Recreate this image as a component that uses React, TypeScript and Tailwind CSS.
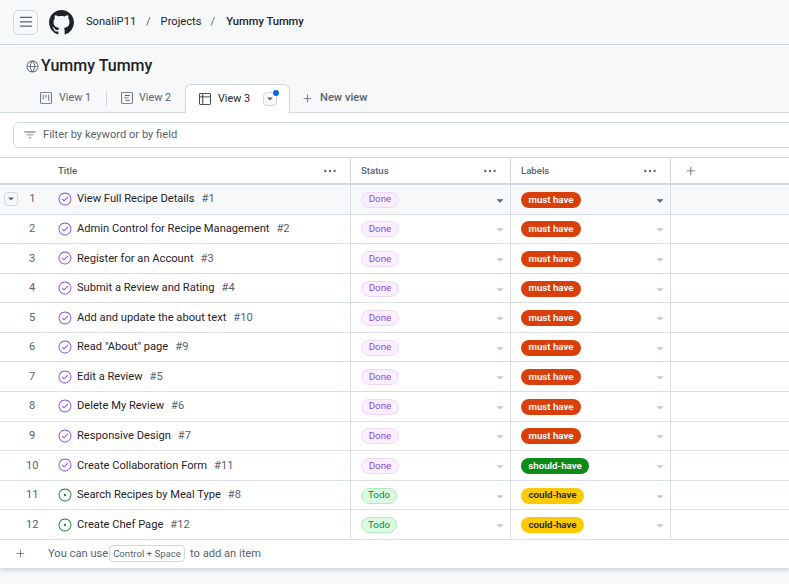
import React from 'react';
import {
  GoGlobe,
  GoProject,
  GoProjectRoadmap,
  GoTable,
  GoPlus,
  GoFilter,
  GoKebabHorizontal,
  GoTriangleDown,
  GoIssueClosed,
  GoIssueOpened,
} from 'react-icons/go';

type Item = { title: string; num: number; status: 'Done' | 'Todo'; label: 'must have' | 'should-have' | 'could-have' };

const items: Item[] = [
  { title: 'View Full Recipe Details', num: 1, status: 'Done', label: 'must have' },
  { title: 'Admin Control for Recipe Management', num: 2, status: 'Done', label: 'must have' },
  { title: 'Register for an Account', num: 3, status: 'Done', label: 'must have' },
  { title: 'Submit a Review and Rating', num: 4, status: 'Done', label: 'must have' },
  { title: 'Add and update the about text', num: 10, status: 'Done', label: 'must have' },
  { title: 'Read "About" page', num: 9, status: 'Done', label: 'must have' },
  { title: 'Edit a Review', num: 5, status: 'Done', label: 'must have' },
  { title: 'Delete My Review', num: 6, status: 'Done', label: 'must have' },
  { title: 'Responsive Design', num: 7, status: 'Done', label: 'must have' },
  { title: 'Create Collaboration Form', num: 11, status: 'Done', label: 'should-have' },
  { title: 'Search Recipes by Meal Type', num: 8, status: 'Todo', label: 'could-have' },
  { title: 'Create Chef Page', num: 12, status: 'Todo', label: 'could-have' },
];

const labelClass = {
  'must have': 'bg-[#d93f0b] text-white w-[60px]',
  'should-have': 'bg-[#0e8a16] text-white w-[68px]',
  'could-have': 'bg-[#fbca04] text-[#1f2328] w-[63px]',
};

const ThreeBars = () => (
  <svg width="14" height="14" viewBox="0 0 16 16" fill="currentColor">
    <path d="M1 2.75A.75.75 0 0 1 1.75 2h12.5a.75.75 0 0 1 0 1.5H1.75A.75.75 0 0 1 1 2.75Zm0 5A.75.75 0 0 1 1.75 7h12.5a.75.75 0 0 1 0 1.5H1.75A.75.75 0 0 1 1 7.75ZM1.75 12h12.5a.75.75 0 0 1 0 1.5H1.75a.75.75 0 0 1 0-1.5Z" />
  </svg>
);

const GithubMark = () => (
  <svg width="25" height="25" viewBox="0 0 16 16" fill="currentColor" className="ml-[11px] text-[#1f2328]">
    <path d="M8 0c4.42 0 8 3.58 8 8a8.013 8.013 0 0 1-5.45 7.59c-.4.08-.55-.17-.55-.38 0-.27.01-1.13.01-2.2 0-.75-.25-1.23-.54-1.48 1.78-.2 3.65-.88 3.65-3.95 0-.88-.31-1.59-.82-2.15.08-.2.36-1.02-.08-2.12 0 0-.67-.22-2.2.82-.64-.18-1.32-.27-2-.27-.68 0-1.36.09-2 .27-1.53-1.03-2.2-.82-2.2-.82-.44 1.1-.16 1.92-.08 2.12-.51.56-.82 1.28-.82 2.15 0 3.06 1.86 3.75 3.64 3.95-.23.2-.44.55-.51 1.07-.46.21-1.61.55-2.33-.66-.15-.24-.6-.83-1.23-.82-.67.01-.27.38.01.53.34.19.73.9.82 1.13.16.45.68 1.31 2.69.94 0 .67.01 1.3.01 1.49 0 .21-.15.45-.55.38A7.995 7.995 0 0 1 0 8c0-4.42 3.58-8 8-8Z" />
  </svg>
);

const Row = ({ item, index }: { item: Item; index: number }) => {
  const active = index === 0;
  const caret = active ? 'text-[#59636e]' : 'text-[#c4c9cf]';
  return (
    <div className={`flex h-[29.58px] border-b border-[#d8dee4] ${active ? 'bg-[#f6f8fa]' : 'bg-white'}`}>
      <div className="w-[47px] shrink-0 flex items-center">
        <div className="w-[18px] pl-1">
          {active && (
            <div className="w-[14px] h-[14px] rounded-[4px] border border-[#d0d7de] bg-[#f6f8fa] flex items-center justify-center text-[#59636e]">
              <GoTriangleDown size={10} />
            </div>
          )}
        </div>
        <span className="w-[31px] mt-px text-center text-[11.15px] text-[#59636e]">{index + 1}</span>
      </div>
      <div className="w-[304px] shrink-0 flex items-center pl-[11px] border-r border-[#d8dee4] text-[11.15px]">
        {item.status === 'Done' ? (
          <GoIssueClosed size={14} className="text-[#8250df] shrink-0" />
        ) : (
          <GoIssueOpened size={14} className="text-[#1a7f37] shrink-0" />
        )}
        <span className="ml-[5px] mt-px text-[#1f2328] whitespace-nowrap">{item.title}</span>
        <span className="ml-[7px] mt-px text-[#59636e] whitespace-nowrap">#{item.num}</span>
      </div>
      <div className="w-[160px] shrink-0 flex items-center justify-between pl-[10px] pr-[4px] border-r border-[#d8dee4]">
        {item.status === 'Done' ? (
          <span className="mt-px h-4 w-[38px] rounded-full border border-[#ecd8ff] bg-[#fbefff] text-[#8250df] text-[9.8px] flex items-center justify-center">
            Done
          </span>
        ) : (
          <span className="mt-px h-4 w-[36px] rounded-full border border-[#aceebb] bg-[#dafbe1] text-[#1a7f37] text-[9.8px] flex items-center justify-center">
            Todo
          </span>
        )}
        <GoTriangleDown size={12} className={`mt-[3px] ${caret}`} />
      </div>
      <div className="w-[160px] shrink-0 flex items-center justify-between pl-[10px] pr-[4px] border-r border-[#d8dee4]">
        <span className={`mt-px h-4 rounded-full text-[9.7px] font-semibold flex items-center justify-center whitespace-nowrap ${labelClass[item.label]}`}>
          {item.label}
        </span>
        <GoTriangleDown size={12} className={`mt-[3px] ${caret}`} />
      </div>
      <div className="flex-1" />
    </div>
  );
};

export default function App() {
  return (
    <div className="w-[789px] h-[584px] overflow-hidden bg-[#f6f8fa] text-[#1f2328] font-['Roboto','Open_Sans',sans-serif] text-[11.15px]">
      {/* Top bar */}
      <header className="h-[45px] border-b border-[#d0d7de] flex items-center pl-[13px]">
        <div className="w-[25px] h-[25px] rounded-[6px] border border-[#d0d7de] flex items-center justify-center text-[#59636e]">
          <ThreeBars />
        </div>
        <GithubMark />
        <span className="ml-[12px] w-[49px] text-[#1f2328]">SonaliP11</span>
        <span className="ml-[11px] text-[#59636e]">/</span>
        <span className="ml-[10px] w-[40px] text-[#1f2328]">Projects</span>
        <span className="ml-[10px] text-[#59636e]">/</span>
        <span className="ml-[11px] font-medium text-[#1f2328]">Yummy Tummy</span>
      </header>

      {/* Project title and tabs */}
      <div className="h-[68px] border-b border-[#d0d7de] relative">
        <div className="flex items-center pl-[26px] pt-[3px] h-[39px]">
          <GoGlobe size={13} className="text-[#59636e]" />
          <h1 className="ml-[2px] text-[16px] font-medium leading-none">Yummy Tummy</h1>
        </div>
        <div className="flex items-end h-[28px] pl-[39px]">
          <div className="flex items-center h-[28px] text-[#59636e]">
            <GoProject size={14} />
            <span className="ml-[6px] mt-px w-[32px] text-[10.8px] whitespace-nowrap">View 1</span>
          </div>
          <div className="ml-[15px] w-px h-[15px] mb-[6px] bg-[#d0d7de]" />
          <div className="ml-[13px] flex items-center h-[28px] text-[#59636e]">
            <GoProjectRoadmap size={14} />
            <span className="ml-[5px] mt-px w-[32px] text-[10.8px] whitespace-nowrap">View 2</span>
          </div>
          <div className="ml-[14px] w-[105px] h-[29px] -mb-px shrink-0 flex items-center pl-[12px] bg-white border border-b-0 border-[#d0d7de] rounded-t-[6px]">
            <GoTable size={14} />
            <span className="ml-[6px] mt-px w-[32px] text-[10.8px] whitespace-nowrap">View 3</span>
            <div className="relative ml-[13px] w-[14px] h-[14px] rounded-[4px] border border-[#d0d7de] bg-[#f6f8fa] flex items-center justify-center text-[#59636e]">
              <GoTriangleDown size={10} />
              <span className="absolute -top-[3px] -right-[3px] w-[6px] h-[6px] rounded-full bg-[#0969da]" />
            </div>
          </div>
          <div className="ml-[11px] flex items-center h-[28px] text-[#59636e]">
            <GoPlus size={13} />
            <span className="ml-[6px] font-medium whitespace-nowrap">New view</span>
          </div>
        </div>
      </div>

      {/* Table panel */}
      <div className="bg-white h-[455px] shadow-[0_2px_4px_rgba(140,149,159,0.4)]">
        <div className="h-[44px] flex items-center pl-[13px]">
          <div className="w-[800px] shrink-0 h-[26px] rounded-[6px] border border-[#d0d7de] flex items-center pl-[9px] text-[#59636e]">
            <GoFilter size={14} />
            <span className="ml-[6px] mt-px">Filter by keyword or by field</span>
          </div>
        </div>
        <div className="flex h-[28px] border-t border-b-2 border-[#d0d7de] text-[9.6px] font-medium text-[#59636e]">
          <div className="w-[351px] shrink-0 flex items-center justify-between pl-[58px] pr-[13px] border-r border-[#d0d7de]">
            <span className="mt-[2px]">Title</span>
            <GoKebabHorizontal size={14} />
          </div>
          <div className="w-[160px] shrink-0 flex items-center justify-between pl-[10px] pr-[13px] border-r border-[#d0d7de]">
            <span className="mt-[2px]">Status</span>
            <GoKebabHorizontal size={14} />
          </div>
          <div className="w-[160px] shrink-0 flex items-center justify-between pl-[10px] pr-[13px] border-r border-[#d0d7de]">
            <span className="mt-[2px]">Labels</span>
            <GoKebabHorizontal size={14} />
          </div>
          <div className="flex-1 flex items-center pl-[13px]">
            <GoPlus size={14} />
          </div>
        </div>
        {items.map((item, i) => (
          <Row key={item.num} item={item} index={i} />
        ))}
        <div className="h-[28px] flex items-center pl-[14px] text-[#59636e]">
          <GoPlus size={13} />
          <span className="ml-[21px] w-[58px] whitespace-nowrap">You can use</span>
          <span className="ml-[3px] h-[17px] w-[76px] justify-center rounded-[4px] border border-[#d0d7de] text-[9.6px] flex items-center whitespace-nowrap">Control + Space</span>
          <span className="ml-[5px]">to add an item</span>
        </div>
      </div>
    </div>
  );
}
